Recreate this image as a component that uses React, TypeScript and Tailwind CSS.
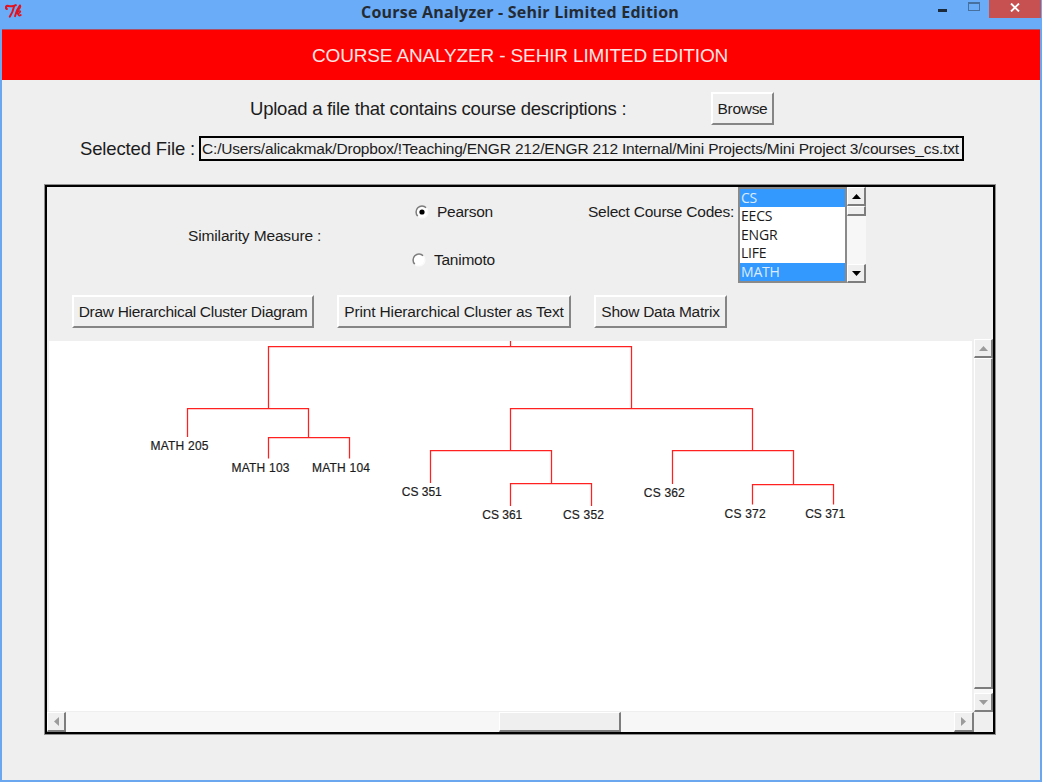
import type { ReactNode } from 'react';

const raised =
  'border-t border-l border-r-2 border-b-2 border-t-white border-l-white border-r-[#7d7d7d] border-b-[#7d7d7d] bg-[#efefef]';

function ToolButton({ className, children }: { className: string; children: ReactNode }) {
  return (
    <button
      className={`flex shrink-0 items-center justify-center whitespace-nowrap border-2 border-t-white border-l-white border-r-[#858585] border-b-[#858585] bg-[#efefef] text-[15.5px] leading-none ${className}`}
    >
      {children}
    </button>
  );
}

const arrows = {
  up: 'M0 5 L4.5 0 L9 5 Z',
  down: 'M0 0 L9 0 L4.5 5 Z',
  left: 'M5 0 L5 9 L0 4.5 Z',
  right: 'M0 0 L5 4.5 L0 9 Z',
};

function ArrowButton({ dir, color, className }: { dir: keyof typeof arrows; color: string; className: string }) {
  const vertical = dir === 'up' || dir === 'down';
  const w = vertical ? 9 : 5;
  const h = vertical ? 5 : 9;
  return (
    <button className={`flex shrink-0 items-center justify-center ${raised} ${className}`}>
      <svg width={w} height={h} viewBox={`0 0 ${w} ${h}`}>
        <path d={arrows[dir]} fill={color} />
      </svg>
    </button>
  );
}

function Radio({ checked, label, className }: { checked?: boolean; label: string; className: string }) {
  return (
    <label className={`flex items-center whitespace-nowrap text-[15.5px] leading-[20px] tracking-[-0.25px] ${className}`}>
      <svg width="14" height="14" viewBox="0 0 14 14" className="shrink-0">
        <circle cx="7" cy="7" r="5.5" fill="#fff" />
        <path d="M2.8 11.2 A5.9 5.9 0 0 1 11.2 2.8" fill="none" stroke="#7c7c7c" strokeWidth="1.5" />
        <path d="M11.2 2.8 A5.9 5.9 0 0 1 2.8 11.2" fill="none" stroke="#fafafa" strokeWidth="1.3" />
        {checked && <circle cx="7" cy="7" r="2.6" fill="#000" />}
      </svg>
      <span className="mt-px ml-2">{label}</span>
    </label>
  );
}

const codes = [
  { name: 'CS', selected: true },
  { name: 'EECS', selected: false },
  { name: 'ENGR', selected: false },
  { name: 'LIFE', selected: false },
  { name: 'MATH', selected: true },
];

const branches = [
  'M510.5 341 V346.5',
  'M268.5 408.5 V346.5 H631.5 V408.5',
  'M187.5 437 V408.5 H308.5 V437.5',
  'M268.5 458.5 V437.5 H349.5 V458.5',
  'M510.5 450.5 V408.5 H752.5 V450.5',
  'M430.5 483 V450.5 H551.5 V483.5',
  'M510.5 506 V483.5 H591.5 V506',
  'M672.5 484 V450.5 H793.5 V484.5',
  'M752.5 504.5 V484.5 H833.5 V504.5',
];

const leaves = [
  { name: 'MATH 205', x: 150.5, y: 450, w: 58 },
  { name: 'MATH 103', x: 231.5, y: 472, w: 58 },
  { name: 'MATH 104', x: 312, y: 472, w: 58 },
  { name: 'CS 351', x: 401.8, y: 496, w: 40 },
  { name: 'CS 361', x: 482.3, y: 519, w: 40 },
  { name: 'CS 352', x: 563, y: 519, w: 41 },
  { name: 'CS 362', x: 643.8, y: 497, w: 41 },
  { name: 'CS 372', x: 724.6, y: 518, w: 41 },
  { name: 'CS 371', x: 805.2, y: 518, w: 40 },
];

function Dendrogram() {
  return (
    <svg width="923" height="370" viewBox="49 341 923 370" className="block bg-white">
      <g fill="none" stroke="#ff2020" strokeWidth="1.25">
        {branches.map((d) => (
          <path key={d} d={d} />
        ))}
      </g>
      <g fill="#1c1c1c" stroke="#1c1c1c" strokeWidth="0.2" className="font-['Liberation_Sans',sans-serif] text-[12px]">
        {leaves.map((l) => (
          <text key={l.name} x={l.x} y={l.y} textLength={l.w}>
            {l.name}
          </text>
        ))}
      </g>
    </svg>
  );
}

function TitleBar() {
  return (
    <div className="flex h-[29px] shrink-0 items-start bg-[#6aacf7]">
      <div className="w-[361px] pt-[4px] pl-[5px]">
        <svg width="18" height="15" viewBox="0 0 18 15" fill="none" stroke="#e3121f" strokeLinecap="round" strokeLinejoin="round">
          <path d="M1.8 5 C-0.2 3.2 1.4 1.6 3.4 2 C5.6 2.4 8.4 2.6 10.8 1.2" strokeWidth="2.1" />
          <path d="M9 2.6 C8.2 6.4 7 9.6 4.8 12.6" strokeWidth="2" />
          <path d="M15 1.4 C13 4 11 8 10 12.2" strokeWidth="1.9" />
          <path d="M15.2 1.4 C16.6 2.2 14.6 5.2 12.2 7.2" strokeWidth="1.2" />
          <path d="M11.4 9.2 C13 6.6 15.8 6.4 15.2 8 C14.6 9.3 13 9.4 12.4 9.4 C13.6 9.8 13.2 12.8 15.8 11" strokeWidth="1.7" />
        </svg>
      </div>
      <h1 className="whitespace-nowrap font-['Open_Sans',sans-serif] text-[16px] leading-[24px] font-bold tracking-[0.23px] text-[#252b33]">
        Course Analyzer - Sehir Limited Edition
      </h1>
      <div className="ml-auto flex items-start">
        <span className="mt-[9px] h-[3px] w-[9px] bg-[#1d2a3a]" />
        <span className="mt-[2px] ml-[21px] h-[9px] w-[12px] border border-t-2 border-[#47709f]" />
        <button className="mr-[1px] ml-[9px] flex h-[18px] w-[52px] items-start justify-center bg-[#c75050] pt-[3px]">
          <svg width="10" height="9" viewBox="0 0 10 9" stroke="#fff" strokeWidth="1.9">
            <path d="M1 0.5 L9 8.5 M9 0.5 L1 8.5" />
          </svg>
        </button>
      </div>
    </div>
  );
}

function CourseList() {
  return (
    <div className="flex h-[96px]">
      <ul className="w-[109px] border-2 border-[#8a8a8a] bg-white font-['Open_Sans',sans-serif] text-[14px]">
        {codes.map((c) => (
          <li
            key={c.name}
            className={`h-[18.4px] pl-px leading-[18px] tracking-[-0.2px] ${c.selected ? 'bg-[#3399ff] text-[#dcebff]' : 'text-[#1a1a1a]'}`}
          >
            {c.name}
          </li>
        ))}
      </ul>
      <div className="flex w-[19px] flex-col bg-[#f7f7f7]">
        <ArrowButton dir="up" color="#000" className="h-[19px] w-full" />
        <div className={`h-[10px] ${raised}`} />
        <div className="flex-1" />
        <ArrowButton dir="down" color="#000" className="h-[19px] w-full" />
      </div>
    </div>
  );
}

export default function App() {
  return (
    <div className="flex h-[782px] w-[1042px] flex-col overflow-hidden bg-[#6aa7ee] font-['Liberation_Sans',sans-serif] text-[#1c1c1c]">
      <TitleBar />
      <div className="mr-[2px] ml-[2px] flex h-[751px] flex-col bg-[#efefef]">
        <div className="flex h-[51px] shrink-0 items-center border-t border-[#a8506a] bg-[#ff0000] pl-[310px]">
          <h2 className="whitespace-nowrap text-[19px] leading-none tracking-[-0.15px] text-[#ffe4e4]">
            COURSE ANALYZER - SEHIR LIMITED EDITION
          </h2>
        </div>

        <div className="mt-[12px] flex h-[33px] shrink-0 items-center pl-[248px]">
          <span className="w-[461px] pt-px text-[18.5px] tracking-[-0.23px] whitespace-nowrap">
            Upload a file that contains course descriptions :
          </span>
          <ToolButton className="h-[33px] w-[63px] tracking-[-0.3px]">Browse</ToolButton>
        </div>

        <div className="mt-[11px] flex h-[25px] shrink-0 items-center pl-[78px]">
          <span className="w-[119px] pt-px text-[18.5px] tracking-[-0.14px] whitespace-nowrap">Selected File :</span>
          <div className="flex h-[25px] w-[765px] items-center border-2 border-black pt-px pl-px text-[15.5px] tracking-[-0.18px] whitespace-nowrap">
            C:/Users/alicakmak/Dropbox/!Teaching/ENGR 212/ENGR 212 Internal/Mini Projects/Mini Project 3/courses_cs.txt
          </div>
        </div>

        <div className="mt-[24px] ml-[43px] flex h-[549px] w-[950px] shrink-0 flex-col border-2 border-black outline-1 outline-black/40">
          <div className="h-[152px]">
            <div className="flex h-[96px]">
              <div className="flex w-[365px] items-center pt-[2px] pl-[141px] text-[15.5px] tracking-[-0.14px]">Similarity Measure :</div>
              <div className="flex w-[176px] flex-col">
                <Radio checked label="Pearson" className="mt-[14px] ml-[3px]" />
                <Radio label="Tanimoto" className="mt-[27px]" />
              </div>
              <div className="w-[150px] pt-[15px] text-[15.5px] leading-[20px] tracking-[-0.24px] whitespace-nowrap">
                Select Course Codes:
              </div>
              <CourseList />
            </div>
            <div className="mt-[12px] ml-[25px] flex">
              <ToolButton className="mr-[23px] h-[33px] w-[242px] tracking-[-0.3px]">Draw Hierarchical Cluster Diagram</ToolButton>
              <ToolButton className="mr-[23px] h-[33px] w-[234px] tracking-[-0.15px]">Print Hierarchical Cluster as Text</ToolButton>
              <ToolButton className="h-[33px] w-[133px] tracking-[-0.25px]">Show Data Matrix</ToolButton>
            </div>
          </div>

          <div className="flex h-[373px]">
            <div className="w-[927px] pt-[2px] pl-[2px]">
              <Dendrogram />
            </div>
            <div className="flex w-[19px] flex-col bg-[#f7f7f7]">
              <ArrowButton dir="up" color="#9b9b9b" className="h-[19px] w-full" />
              <div className={`h-[331px] ${raised}`} />
              <div className="flex-1" />
              <ArrowButton dir="down" color="#9b9b9b" className="h-[19px] w-full" />
            </div>
          </div>
          <div className="flex h-[20px]">
            <div className="flex w-[927px] bg-[#f7f7f7]">
              <ArrowButton dir="left" color="#9b9b9b" className="h-full w-[19px]" />
              <div className={`ml-[433px] w-[122px] ${raised}`} />
              <div className="flex-1" />
              <ArrowButton dir="right" color="#9b9b9b" className="h-full w-[20px]" />
            </div>
          </div>
        </div>
      </div>
    </div>
  );
}
